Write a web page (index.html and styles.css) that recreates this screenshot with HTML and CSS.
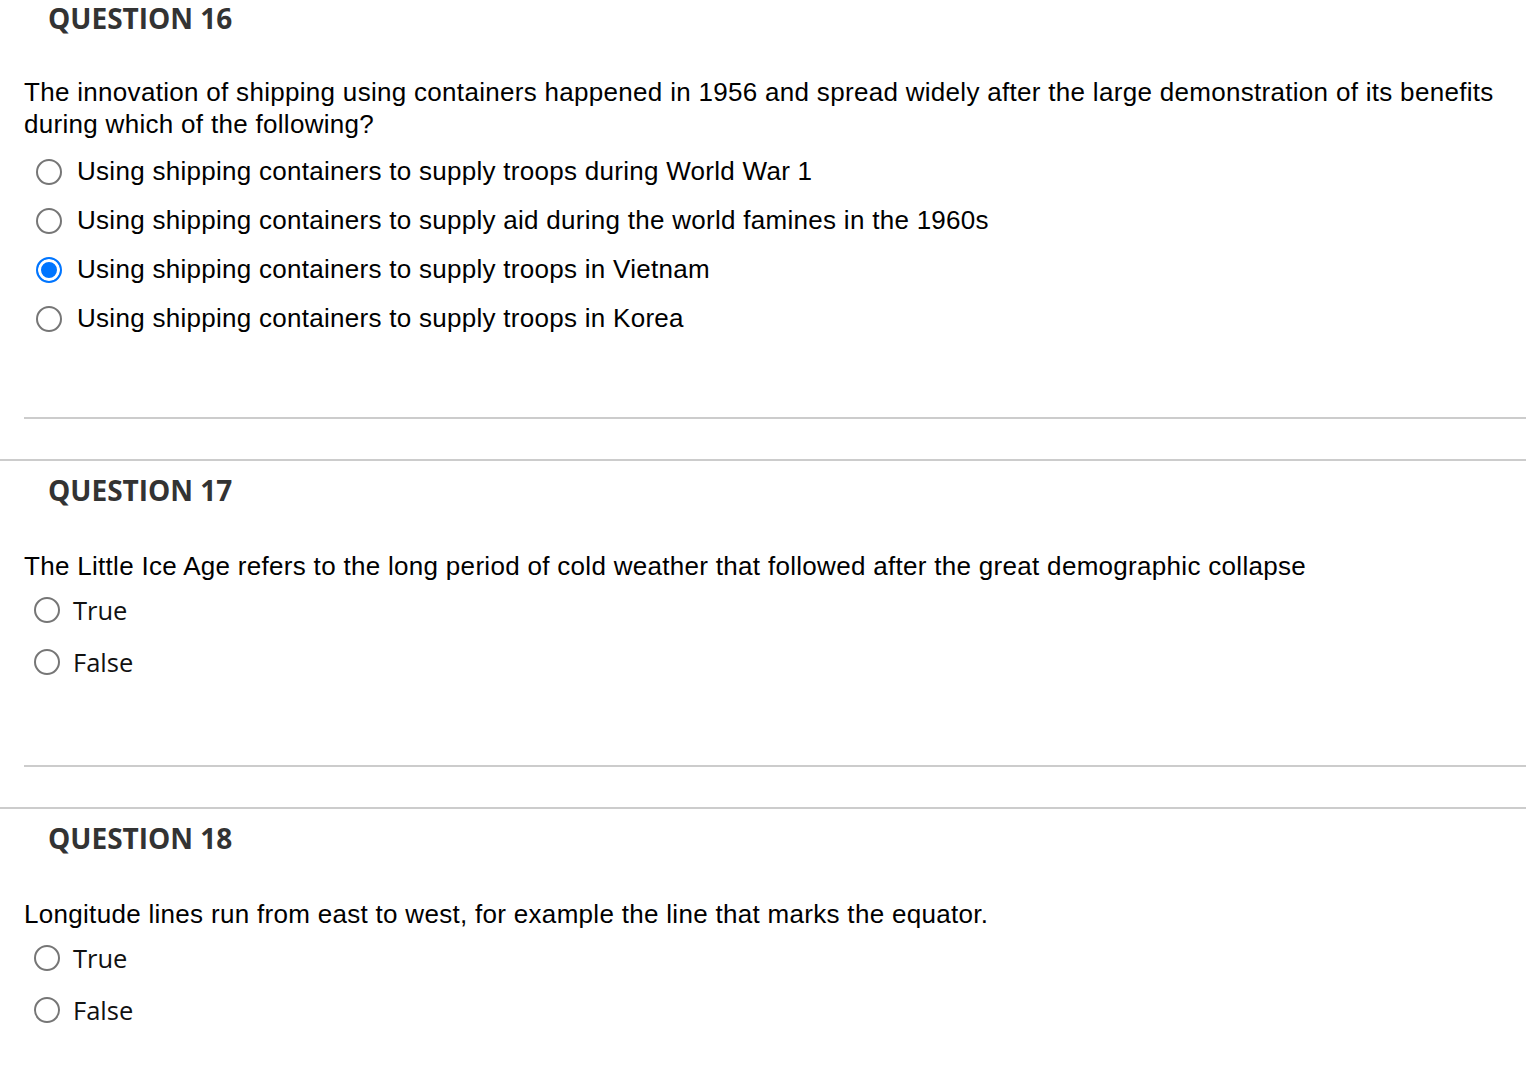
FILE: index.html
```html
<!DOCTYPE html>
<html lang="en">
<head>
<meta charset="utf-8">
<title>Quiz</title>
<link rel="stylesheet" href="styles.css">
</head>
<body>
<div class="page">
  <section class="question first">
    <h2 class="q-title">QUESTION 16</h2>
    <p class="q-text mc-text">The innovation of shipping using containers happened in 1956 and spread widely after the large demonstration of its benefits during which of the following?</p>
    <ul class="options mc">
      <li class="option"><span class="radio"></span><span class="label">Using shipping containers to supply troops during World War 1</span></li>
      <li class="option"><span class="radio"></span><span class="label">Using shipping containers to supply aid during the world famines in the 1960s</span></li>
      <li class="option"><span class="radio checked"></span><span class="label">Using shipping containers to supply troops in Vietnam</span></li>
      <li class="option"><span class="radio"></span><span class="label">Using shipping containers to supply troops in Korea</span></li>
    </ul>
    <hr class="q-sep">
  </section>
  <section class="question">
    <h2 class="q-title">QUESTION 17</h2>
    <p class="q-text tf-text">The Little Ice Age refers to the long period of cold weather that followed after the great demographic collapse</p>
    <ul class="options tf">
      <li class="option"><span class="radio"></span><span class="label">True</span></li>
      <li class="option"><span class="radio"></span><span class="label">False</span></li>
    </ul>
    <hr class="q-sep">
  </section>
  <section class="question">
    <h2 class="q-title">QUESTION 18</h2>
    <p class="q-text tf-text">Longitude lines run from east to west, for example the line that marks the equator.</p>
    <ul class="options tf">
      <li class="option"><span class="radio"></span><span class="label">True</span></li>
      <li class="option"><span class="radio"></span><span class="label">False</span></li>
    </ul>
  </section>
</div>
</body>
</html>
```

FILE: styles.css
```css
html, body {
  margin: 0;
  padding: 0;
  background: #fff;
}

.page {
  width: 100%;
}

.question {
  padding-left: 24px;
}

.question + .question {
  border-top: 2px solid #cccccc;
  padding-top: 10px;
}

.q-title {
  margin: 0;
  padding-left: 24px;
  font-family: "Open Sans", sans-serif;
  font-weight: 700;
  font-size: 28px;
  line-height: 38px;
  color: #333333;
}

.question.first .q-title {
  margin-top: -1px;
}

.q-text {
  margin: 40px 0 0;
  font-family: "Liberation Sans", Arial, sans-serif;
  font-size: 26px;
  letter-spacing: 0.3px;
  line-height: 32px;
  color: #000;
}

.mc-text {
  margin-top: 39px;
  margin-bottom: 7px;
}

.tf-text {
  margin-top: 41px;
  margin-bottom: 2px;
}

.options {
  list-style: none;
  margin: 0;
  padding: 0;
}

.options.mc {
  padding-left: 12px;
  margin-bottom: 74px;
}

.options.tf {
  padding-left: 10px;
  margin-bottom: 77px;
}

.option {
  display: flex;
  align-items: center;
}

.mc .option {
  height: 49px;
  gap: 15px;
  font-family: "Liberation Sans", Arial, sans-serif;
  font-size: 26px;
  letter-spacing: 0.28px;
  color: #000;
}

.tf .option {
  height: 52px;
  gap: 13px;
  font-family: "Open Sans", sans-serif;
  font-size: 25.5px;
  color: #111;
}

.radio {
  flex: none;
  width: 26px;
  height: 26px;
  box-sizing: border-box;
  border: 2px solid #767676;
  border-radius: 50%;
  background: #fff;
}

.radio.checked {
  border-color: #0075ff;
  background: #0075ff;
  box-shadow: inset 0 0 0 3px #fff;
}

.q-sep {
  margin: 0 0 40px;
  height: 0;
  border: 0;
  border-top: 2px solid #cccccc;
}
```
